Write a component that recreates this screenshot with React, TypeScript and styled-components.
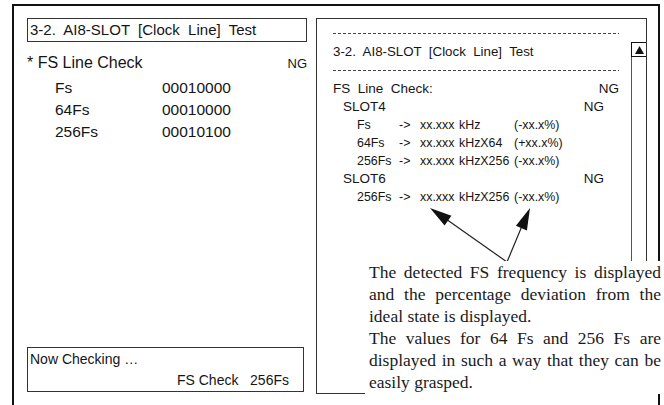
import React from "react";
import styled, { createGlobalStyle } from "styled-components";

const GlobalStyle = createGlobalStyle`
  html, body {
    margin: 0;
    padding: 0;
    background: #fff;
    overflow: hidden;
  }
  body {
    font-family: "Liberation Sans", Arial, sans-serif;
    color: #151515;
  }
`;

const Page = styled.div`
  position: relative;
  width: 664px;
  height: 405px;
  overflow: hidden;
  padding: 4px 0 0 12px;
  box-sizing: border-box;
`;

const Frame = styled.div`
  width: 648px;
  height: 440px;
  box-sizing: border-box;
  border: 2px solid #111;
  display: flex;
  gap: 9px;
  padding: 12px 0 0 13px;
`;

/* ---------- left screen ---------- */

const LeftPanel = styled.div`
  width: 280px;
  height: 376px;
  display: flex;
  flex-direction: column;
`;

const TitleBox = styled.div`
  height: 24px;
  box-sizing: border-box;
  border: 1px solid #333;
  padding-left: 2px;
  font-size: 15px;
  line-height: 22px;
  white-space: pre;
`;

const CheckHeader = styled.div`
  display: flex;
  justify-content: space-between;
  align-items: center;
  margin-top: 10px;
  margin-bottom: 3px;
  height: 22px;
`;

const CheckTitle = styled.span`
  font-size: 16px;
`;

const Verdict = styled.span<{ $size?: number }>`
  font-size: ${(p) => p.$size ?? 13}px;
`;

const ValueRow = styled.div`
  display: grid;
  grid-template-columns: 107px auto;
  padding-left: 28px;
  font-size: 15.5px;
  line-height: 22px;
`;

const StatusBox = styled.div`
  margin-top: auto;
  margin-bottom: 2px;
  width: 277px;
  height: 45px;
  box-sizing: border-box;
  border: 1px solid #333;
  padding: 1px 14px 1px 2px;
  font-size: 14px;
  display: flex;
  flex-direction: column;
  justify-content: space-between;
`;

const StatusLine = styled.div<{ $right?: boolean }>`
  line-height: 20px;
  white-space: pre;
  text-align: ${(p) => (p.$right ? "right" : "left")};
`;

/* ---------- right screen ---------- */

const RightPanel = styled.div`
  width: 331px;
  height: 376px;
  box-sizing: border-box;
  border: 1px solid #333;
  display: flex;
`;

const LogArea = styled.div`
  flex: 1;
  padding: 14px 12px 0 16px;
  font-size: 13px;
`;

const Dashed = styled.div`
  height: 1px;
  background-image: repeating-linear-gradient(
    to right,
    #444 0 3px,
    transparent 3px 5px
  );
`;

const LogTitle = styled.div`
  height: 36px;
  line-height: 36px;
  white-space: pre;
  font-size: 13.3px;
`;

const LogRow = styled.div<{ $indent?: number; $first?: boolean }>`
  display: flex;
  justify-content: space-between;
  height: 18px;
  line-height: 18px;
  padding-left: ${(p) => p.$indent ?? 0}px;
  padding-right: ${(p) => (p.$indent ? 15 : 0)}px;
  margin-top: ${(p) => (p.$first ? 9 : 0)}px;
  white-space: pre;
  font-size: 13.5px;
`;

const FreqRow = styled.div`
  display: grid;
  grid-template-columns: 42px 21px 39px 55px auto;
  padding-left: 24px;
  height: 18px;
  line-height: 18px;
  font-size: 12.4px;
  white-space: pre;
`;

const ScrollTrack = styled.div`
  width: 14px;
  margin-top: 23px;
  border-left: 1px solid #555;
`;

const ScrollButton = styled.div`
  height: 15px;
  box-sizing: border-box;
  margin-left: -1px;
  border: 1px solid #111;
  border-right: none;
  display: flex;
  align-items: center;
  justify-content: center;
`;

/* ---------- callout ---------- */

const Callout = styled.div`
  position: absolute;
  left: 365px;
  top: 261px;
  width: 299px;
  height: 133px;
  background: #fff;
  padding-left: 4px;
  box-sizing: border-box;
  font-family: "Liberation Serif", "Times New Roman", serif;
  font-size: 17.5px;
  line-height: 22px;
  color: #1a1a1a;
`;

const CalloutLine = styled.div<{ $last?: boolean }>`
  width: 292px;
  white-space: nowrap;
  text-align: justify;
  text-align-last: ${(p) => (p.$last ? "left" : "justify")};
`;

const Arrows = styled.svg`
  position: absolute;
  left: 0;
  top: 0;
  pointer-events: none;
`;

const freqRows = [
  ["Fs", "->", "xx.xxx", "kHz", "(-xx.x%)"],
  ["64Fs", "->", "xx.xxx", "kHzX64", "(+xx.x%)"],
  ["256Fs", "->", "xx.xxx", "kHzX256", "(-xx.x%)"],
];

const Freq = ({ cells }: { cells: string[] }) => (
  <FreqRow>
    {cells.map((c, i) => (
      <span key={i}>{c}</span>
    ))}
  </FreqRow>
);

export default function App() {
  return (
    <>
      <GlobalStyle />
      <Page>
        <Frame>
          <LeftPanel>
            <TitleBox>{"3-2.  AI8-SLOT  [Clock  Line]  Test"}</TitleBox>
            <CheckHeader>
              <CheckTitle>* FS Line Check</CheckTitle>
              <Verdict>NG</Verdict>
            </CheckHeader>
            <ValueRow>
              <span>Fs</span>
              <span>00010000</span>
            </ValueRow>
            <ValueRow>
              <span>64Fs</span>
              <span>00010000</span>
            </ValueRow>
            <ValueRow>
              <span>256Fs</span>
              <span>00010100</span>
            </ValueRow>
            <StatusBox>
              <StatusLine>Now Checking …</StatusLine>
              <StatusLine $right>{"FS Check   256Fs"}</StatusLine>
            </StatusBox>
          </LeftPanel>

          <RightPanel>
            <LogArea>
              <Dashed />
              <LogTitle>{"3-2.  AI8-SLOT  [Clock  Line]  Test"}</LogTitle>
              <Dashed />
              <LogRow $first>
                <span>{"FS  Line  Check:"}</span>
                <span>NG</span>
              </LogRow>
              <LogRow $indent={10}>
                <span>SLOT4</span>
                <span>NG</span>
              </LogRow>
              {freqRows.map((r) => (
                <Freq key={r[0]} cells={r} />
              ))}
              <LogRow $indent={10}>
                <span>SLOT6</span>
                <span>NG</span>
              </LogRow>
              <Freq cells={freqRows[2]} />
            </LogArea>
            <ScrollTrack>
              <ScrollButton>
                <svg width="9" height="8" viewBox="0 0 9 8">
                  <polygon points="4.5,0 9,8 0,8" fill="#111" />
                </svg>
              </ScrollButton>
            </ScrollTrack>
          </RightPanel>
        </Frame>

        <Arrows width="664" height="405" viewBox="0 0 664 405">
          <g stroke="#222" strokeWidth="1.2" fill="none">
            <line x1="507" y1="262" x2="446" y2="219" />
            <line x1="507" y1="262" x2="522" y2="226" />
          </g>
          <g fill="#111">
            <polygon points="430,208 451.4,215.7 444.6,225.5" />
            <polygon points="530,208 526.9,230.6 515.9,225.8" />
          </g>
        </Arrows>

        <Callout>
          <CalloutLine>The detected FS frequency is displayed</CalloutLine>
          <CalloutLine>and the percentage deviation from the</CalloutLine>
          <CalloutLine $last>ideal state is displayed.</CalloutLine>
          <CalloutLine>The values for 64 Fs and 256 Fs are</CalloutLine>
          <CalloutLine>displayed in such a way that they can be</CalloutLine>
          <CalloutLine $last>easily grasped.</CalloutLine>
        </Callout>
      </Page>
    </>
  );
}
